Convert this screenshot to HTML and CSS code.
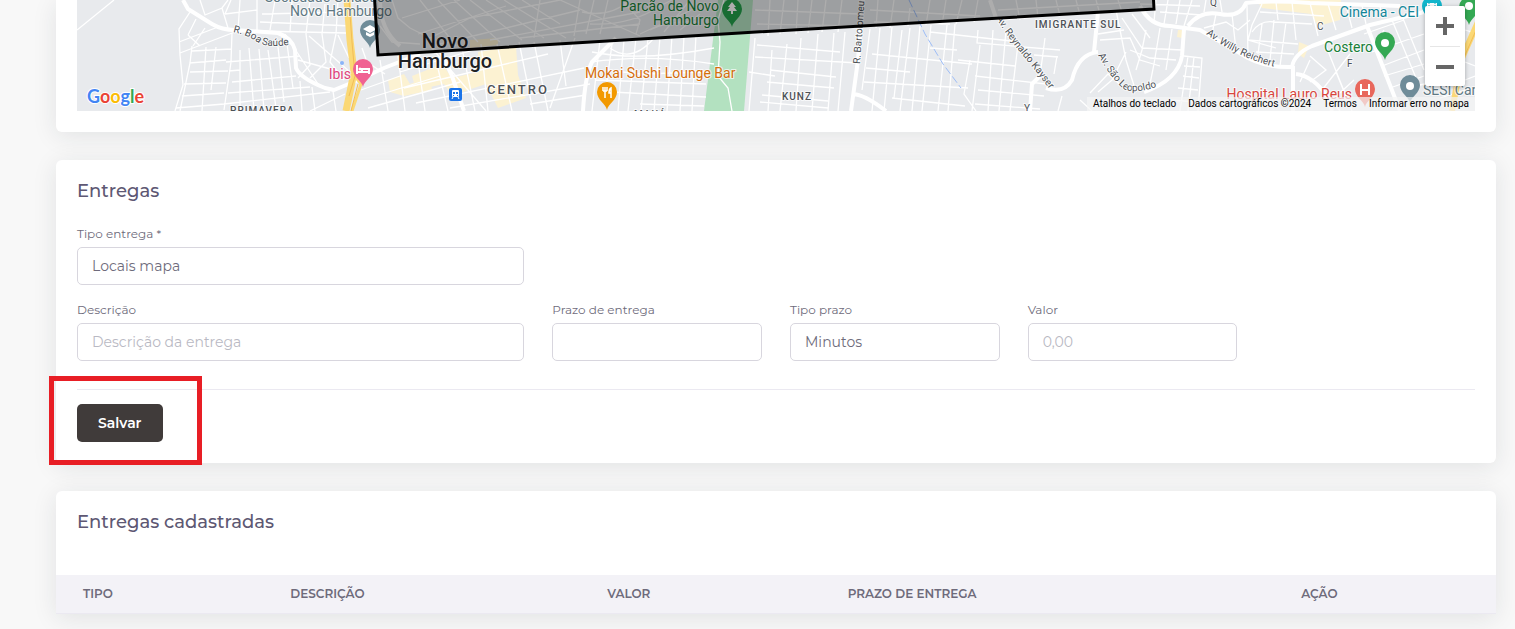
FILE: index.html
```html
<!DOCTYPE html>
<html lang="pt-br">
<head>
    <meta charset="UTF-8">
    <meta name="viewport" content="width=device-width, initial-scale=1.0">
    <title>Entregas</title>
    <link rel="stylesheet" href="styles.css">
</head>
<body>

    <main class="content">

        <!-- Mapa com a área de entrega -->
        <section class="card card-map">
            <div class="map">
                <svg class="map-canvas" viewBox="77 0 1398 111" preserveAspectRatio="xMinYMin slice" role="img" aria-label="Mapa de Novo Hamburgo">
                    <defs>
                        <path id="pin" d="M0 17C-1 11-10 7-10-1A10 10 0 0 1 10-1C10 7 1 11 0 17Z"/>
                        <path id="ruaBoaSaude" d="M233 32Q247 35 257 42Q268 49 294 44"/>
                        <path id="ruaBartolomeu" d="M860 64L866-20"/>
                        <path id="avReynaldo" d="M996 18Q1008 38 1025 58T1060 104"/>
                        <path id="avSaoLeo" d="M1098 55Q1112 80 1124 89Q1135 95 1162 85"/>
                        <path id="avWilly" d="M1206 34Q1240 60 1284 69"/>
                    </defs>

                    <rect x="77" width="1398" height="111" fill="#e8eaed"/>

                    <!-- Parque e centro -->
                    <path d="M718 0H753L744 111H704Z" fill="#b3e1c0"/>
                    <g fill="#fcf2d2">
                        <path d="M388 80L404 74L410 84L430 76L432 90L404 96L390 92Z"/>
                        <path d="M412 76L442 64L452 78L478 72L478 52L516 46L518 75L526 98L498 108L486 84L468 90L452 96L444 84L416 90Z"/>
                        <path d="M470 40L498 38L498 45L470 48Z"/>
                        <path d="M1256 0H1341L1340 20L1318 26L1311 14L1262 8Z"/>
                        <path d="M1299 42L1309 46L1304 58L1298 54Z"/>
                        <path d="M1178 30L1183 30L1182 38L1177 37Z"/>
                    </g>

                    <!-- Ruas menores -->
                    <g class="street">
                        <path d="M190 12L179 29L180 55L183 85L175 111M77 30L114 0M179 42L218 27M180 53L240 30M196 19L188 35M205 28L193 46M188 35L200 46M200 0L205 15L222 8L228 0M222 8L228 28M231 0L225 14M240 0L238 30M257 0L257 32M225 14L257 10M190 63L180 111M192 46L190 63L226 60M192 51L232 49M190 72L228 71M184 84L226 83M182 96L224 93M206 47L202 111M216 47L211 90M232 33L231 62L224 110M240 50L240 111M249 48L254 111M259 49L264 110M268 50L276 108M278 47L284 102M287 44L293 88M226 62L300 56M229 71L240 70M232 82L296 76M228 93L310 87M176 108L224 104L330 92"/>
                        <path d="M262 14L350 12M260 22L352 26M258 31L346 33M275 0L270 30M292 0L290 32M310 0L306 34M325 4L322 34M338 0L336 34M285 34L318 84M306 34L310 65L298 78M322 34L326 62L310 78M336 34L330 62L344 80M338 35L349 58M309 36L350 72M298 60L334 70M345 94L310 111M333 91L336 111M300 81L302 111M312 87L315 111"/>
                        <path d="M362 48L367 62L385 74M361 90L400 76M366 99L440 76M368 108L460 82M380 60L388 111M398 56L405 111M417 54L425 111M436 60L448 111M462 48L475 111M481 44L488 111M497 44L512 111M519 42L533 111M534 42L548 111M400 72L480 48M404 88L548 54M416 103L584 68M450 108L590 84M530 104L586 95M430 46L486 111M560 40L566 86M575 38L550 108"/>
                        <path d="M600 40L592 111M612 44L604 104M624 40L618 111M636 38L628 111M648 38L641 111M660 37L654 111M672 36L667 111M684 36L680 111M696 35L692 111M592 52Q640 62 714 48M590 62Q650 54 714 64M596 80L706 84M612 92L706 97M640 104L704 106M606 70L640 74L706 72M610 48Q632 64 654 38"/>
                        <path d="M755 38L749 111M772 50L768 111M787 44L780 111M801 38L796 111M818 34L812 111M834 33L828 111M845 32L838 111M757 45L840 52M755 57L858 63M770 70L836 77M767 82L834 88M762 95L828 101M760 102L828 108M749 72L775 76"/>
                        <path d="M870 29L862 90M880 28L872 111M892 27L884 111M902 30L894 98M910 28L900 111M920 26L912 111M931 25L922 111M947 25L938 111M955 24L948 111M872 54L972 64M866 68L910 72M864 82L968 88M892 98L965 106M930 32L1020 42M930 48L957 50M978 30L977 43L1060 50M970 60L964 94L976 111M980 45L972 111M993 30L988 111M1006 30L999 111M1018 44L1010 111M975 76L1046 84M978 90L1044 96M975 104L1040 109M1045 38L1040 76M1057 56L1054 74M1034 55L1058 57M958 60L1015 66"/>
                        <path d="M1098 34L1124 30M1100 40L1130 38L1140 60L1160 66M1116 10L1126 60L1136 92M1126 52L1112 80L1098 92M1130 50L1150 58L1176 60M1122 18L1142 48L1182 50M1132 14L1150 38M1146 30L1142 50L1136 70M1160 28L1154 64L1150 84M1172 29L1166 70M1090 93L1108 74L1124 88M1080 100L1092 111M1062 96L1058 111"/>
                        <path d="M1184 56L1202 58L1198 111M1184 66L1200 67M1183 76L1199 78M1178 88L1198 90M1170 100L1197 102M1188 56L1180 111M1194 57L1188 111M1140 4L1200 6M1156 0L1154 22M1168 0L1164 24M1180 0L1176 24M1192 0L1184 26M1206 0L1204 12M1220 0L1222 12M1160 12L1202 15M1204 28L1226 22L1238 30L1250 20M1216 14L1212 34M1232 14L1236 50M1247 5L1248 56M1262 4L1252 25L1248 40L1276 48M1262 24L1258 54M1274 20L1270 60M1286 22L1280 66M1252 32Q1260 20 1274 22L1312 24M1248 40L1298 44M1256 52L1294 54M1260 12L1324 16M1276 2L1278 20M1292 2L1296 40M1310 3L1318 36M1328 4L1336 30M1346 5L1352 28M1362 5L1366 24M1380 6L1382 18M1310 56L1326 70L1310 82M1326 46L1346 96M1336 72L1352 111M1310 60L1300 82M1350 54L1322 90M1322 90L1340 111M1354 80L1330 102M1384 30L1374 45M1402 16L1424 70M1392 20L1416 78M1372 52L1424 34M1382 66L1424 50M1384 76L1424 64M1390 88L1424 76M1364 34L1404 20M1408 88L1424 84M1465 30L1475 33M1465 62L1475 66M1465 80L1475 76M1466 90L1440 98"/>
                    </g>

                    <!-- Ruas dentro da área marcada -->
                    <g class="street">
                        <path d="M380 26L392 42L420 44M392 0L398 18L410 28L430 38L470 18L520 8L560 0M420 0L456 46M438 0L478 42M454 0L500 42M470 0L522 40M486 0L544 38M504 0L566 38M522 0L560 24M540 0L534 38M402 18L460 0M418 34L506 6M440 44L580 10M490 40L640 12M520 38L640 24M560 0L640 36M580 0L574 36M594 0L586 34M608 0L600 34M622 0L640 20L636 34M582 12Q610 18 630 0M590 24Q630 26 660 6L672 0M640 34L700 6M650 30Q670 20 700 22M664 32L690 0M680 30L700 14"/>
                        <path d="M755 10L860 14M757 24L858 26M770 0L768 36M784 0L780 34M798 0L796 34M812 0L808 33M826 0L822 32M842 0L838 32M870 10L980 16M874 22L950 24M878 0L876 28M894 0L890 28M910 8L908 26M930 0L926 25M946 0L942 25M962 0L956 24M978 0L974 22M998 10L1140 2M1002 20L1090 12M1016 0L1020 20M1036 0L1038 18M1056 0L1060 16M1076 0L1080 15M1096 0L1100 14M1118 0L1122 12"/>
                    </g>

                    <!-- Avenidas -->
                    <g class="avenue">
                        <path d="M183 0L188 9L212 24Q222 30 235 30L278 33Q292 38 295 50L296 68Q300 78 325 88L334 90L356 81L384 68L420 54"/>
                        <path d="M380 0Q380 30 400 46M440 50L452 76L464 111M616 38L592 62Q585 76 583 111"/>
                        <path d="M863 0L858 60L851 111M852 94Q864 94 886 111"/>
                        <path d="M990 0L996 18M1030 111L1032 84L1040 76M1046 88Q1064 94 1072 80Q1078 54 1098 52M1094 52L1098 12"/>
                        <path d="M1140 6Q1150 26 1170 26L1200 30L1238 52Q1260 68 1292 67Q1294 54 1312 46L1370 25L1424 12M1184 29L1182 56Q1178 80 1144 92M1293 66V111M1296 74Q1314 76 1328 98L1332 111M1367 26L1400 111M1188 26Q1200 10 1220 14T1246 3Q1270 0 1310 3L1400 6"/>
                    </g>
                    <path class="street" d="M724 0L718 20L720 42L718 76L728 88L732 111"/>
                    <path d="M909 0L925 34L943 64L961 88" fill="none" stroke="#9dbdf7" stroke-dasharray="8 3"/>

                    <!-- Rodovias -->
                    <g fill="none" stroke="#fbd875" stroke-width="7">
                        <path d="M347 0L350 40L354 72L350 92L346 111"/>
                        <path d="M355 76L361 84L352 111" stroke-width="3"/>
                        <path d="M1478 22L1462 58L1452 111" stroke-width="6"/>
                    </g>
                    <path d="M349 0L352 42L355 76L349 96M358 84L351 111M1477 28L1462 62" fill="none" stroke="#f2bd56"/>
                    <circle cx="342" cy="63" r="2" fill="#8ab4f8"/>

                    <!-- Nomes -->
                    <g class="label street-name">
                        <text><textPath href="#ruaBoaSaude">R. Boa Saúde</textPath></text>
                        <text><textPath href="#ruaBartolomeu">R. Bartolomeu</textPath></text>
                        <text><textPath href="#avReynaldo">Av. Reynaldo Kayser</textPath></text>
                        <text><textPath href="#avSaoLeo">Av. São Leopoldo</textPath></text>
                        <text><textPath href="#avWilly">Av. Willy Reichert</textPath></text>
                        <text x="1210" y="6">Q</text>
                        <text x="1317" y="30">C</text>
                        <text x="1347" y="67">F</text>
                        <text x="1024" y="112">Y</text>
                    </g>
                    <g class="label district">
                        <text x="230" y="114">PRIMAVERA</text>
                        <text x="782" y="100">KUNZ</text>
                        <text x="1035" y="28">IMIGRANTE SUL</text>
                        <text x="634" y="118">MAUÁ</text>
                        <text class="center" x="487" y="94">CENTRO</text>
                    </g>
                    <g class="label city">
                        <text x="445" y="48">Novo</text>
                        <text x="445" y="68">Hamburgo</text>
                    </g>
                    <g class="label place">
                        <text x="392" y="2" text-anchor="end" fill="#5f7883">Sociedade Ginástica</text>
                        <text x="392" y="16" text-anchor="end" fill="#5f7883">Novo Hamburgo</text>
                        <text x="351" y="79" text-anchor="end" fill="#e0447c">Ibis</text>
                        <text x="719" y="11" text-anchor="end" fill="#188038">Parcão de Novo</text>
                        <text x="719" y="25" text-anchor="end" fill="#188038">Hamburgo</text>
                        <text x="585" y="78" fill="#d56e0c">Mokai Sushi Lounge Bar</text>
                        <text x="1419" y="17" text-anchor="end" fill="#12869a">Cinema - CEI</text>
                        <text x="1373" y="52" text-anchor="end" fill="#188038">Costero</text>
                        <text x="1352" y="99" text-anchor="end" fill="#d9453d">Hospital Lauro Reus</text>
                        <text x="1423" y="95" fill="#5f7883">SESI Canudos</text>
                    </g>

                    <!-- Marcadores -->
                    <g transform="translate(370 31)">
                        <use href="#pin" fill="#6f8c99"/>
                        <path d="M-7-2L0-6L7-2L0 2ZM-4 1V4L0 6L4 4V1L0 3Z" fill="#fff"/>
                    </g>
                    <g transform="translate(363 70)">
                        <use href="#pin" fill="#f06292"/>
                        <path d="M-6-5V4M-6 2H6M6 4V-1H-1V2" fill="none" stroke="#fff" stroke-width="2"/>
                        <circle cx="-3" cy="-1" r="1.5" fill="#fff"/>
                    </g>
                    <g transform="translate(732 10)">
                        <use href="#pin" fill="#249f4b"/>
                        <path d="M0-8L4-3H2L5 1H1V4H-1V1H-5L-2-3H-4Z" fill="#fff"/>
                    </g>
                    <g transform="translate(607 93)">
                        <use href="#pin" fill="#f29900"/>
                        <path d="M-4-6V-2M-2-6V5M0-6V-2M-4-2H0M4 5V-5Q2-4 2 0H4" fill="none" stroke="#fff" stroke-width="1.5"/>
                    </g>
                    <g transform="translate(1432 7)">
                        <use href="#pin" fill="#12b5cb"/>
                        <path d="M-5-4H5V4H-5Z" fill="#fff"/>
                        <path d="M-3-4V4M3-4V4" stroke="#12b5cb" stroke-dasharray="1 1"/>
                    </g>
                    <g transform="translate(1469 8)">
                        <use href="#pin" fill="#34a853"/>
                        <circle cy="-2" r="4" fill="#fff"/>
                    </g>
                    <g transform="translate(1385 43)">
                        <use href="#pin" fill="#34a853"/>
                        <circle r="4" fill="#fff"/>
                    </g>
                    <g transform="translate(1410 86)">
                        <use href="#pin" fill="#6f8c99"/>
                        <circle r="4" fill="#fff"/>
                    </g>
                    <g transform="translate(1365 90)">
                        <use href="#pin" fill="#e8675c"/>
                        <path d="M-4-6V5M4-6V5M-4 0H4" fill="none" stroke="#fff" stroke-width="2"/>
                    </g>
                    <g transform="translate(449 88)">
                        <rect width="13" height="13" rx="2" fill="#1a73e8"/>
                        <rect x="3" y="2" width="7" height="7" rx="1" fill="#fff"/>
                        <path d="M4 4H6V6H4ZM7 4H9V6H7ZM4 7H5V8H4ZM8 7H9V8H8Z" fill="#1a73e8"/>
                        <path d="M4 9L3 11M9 9L10 11" stroke="#fff"/>
                    </g>

                    <!-- Área de entrega -->
                    <path d="M374-10L378 55L740 33L1154 9L1153-10Z" fill="#000" fill-opacity="0.32" stroke="#000" stroke-width="3"/>

                    <text class="google" x="87" y="103"><tspan fill="#4285f4">G</tspan><tspan fill="#ea4335">o</tspan><tspan fill="#fbbc04">o</tspan><tspan fill="#4285f4">g</tspan><tspan fill="#34a853">l</tspan><tspan fill="#ea4335">e</tspan></text>
                </svg>

                <div class="map-zoom">
                    <button type="button" aria-label="Aumentar o zoom">
                        <svg width="18" height="18" viewBox="0 0 18 18"><path d="M9 0V18M0 9H18" stroke="#666" stroke-width="4"/></svg>
                    </button>
                    <button type="button" aria-label="Diminuir o zoom">
                        <svg width="18" height="18" viewBox="0 0 18 18"><path d="M0 9H18" stroke="#666" stroke-width="4"/></svg>
                    </button>
                </div>

                <div class="map-footer">
                    <button type="button">Atalhos do teclado</button>
                    <span>Dados cartográficos ©2024</span>
                    <a href="#">Termos</a>
                    <a href="#">Informar erro no mapa</a>
                </div>
            </div>
        </section>

        <!-- Formulário de entregas -->
        <section class="card">
            <h2>Entregas</h2>
            <form>
                <div class="form-grid">
                    <div class="form-group wide">
                        <label for="tipoEntrega">Tipo entrega *</label>
                        <select id="tipoEntrega">
                            <option>Locais mapa</option>
                        </select>
                    </div>
                    <div class="form-group wide">
                        <label for="descricao">Descrição</label>
                        <input type="text" id="descricao" placeholder="Descrição da entrega">
                    </div>
                    <div class="form-group">
                        <label for="prazo">Prazo de entrega</label>
                        <input type="text" id="prazo">
                    </div>
                    <div class="form-group">
                        <label for="tipoPrazo">Tipo prazo</label>
                        <select id="tipoPrazo">
                            <option>Minutos</option>
                        </select>
                    </div>
                    <div class="form-group">
                        <label for="valor">Valor</label>
                        <input type="text" id="valor" placeholder="0,00">
                    </div>
                </div>
                <div class="form-actions">
                    <div class="save">
                        <button type="submit" class="btn">Salvar</button>
                        <span class="highlight"></span>
                    </div>
                </div>
            </form>
        </section>

        <!-- Lista de entregas -->
        <section class="card card-table">
            <h2>Entregas cadastradas</h2>
            <table>
                <thead>
                    <tr>
                        <th class="col-tipo">Tipo</th>
                        <th class="col-descricao">Descrição</th>
                        <th class="col-valor">Valor</th>
                        <th class="col-prazo">Prazo de entrega</th>
                        <th class="col-acao">Ação</th>
                    </tr>
                </thead>
            </table>
        </section>

    </main>

</body>
</html>
```
FILE: styles.css
```css
* {
    box-sizing: border-box;
}
body {
    margin: 0;
    background-color: #f8f8f8;
    font-family: Montserrat, Inter, sans-serif;
    font-size: 14px;
    color: #6e6b7b;
}
.content {
    display: flex;
    flex-direction: column;
    gap: 28px;
    padding: 0 19px 16px 56px;
}
.card {
    padding: 21px;
    background-color: #fff;
    border-radius: 6px;
    box-shadow: 0 4px 24px rgba(34, 41, 47, 0.1);
}
.card h2 {
    margin: 0 0 24px;
    font-size: 18px;
    line-height: 20px;
    font-weight: 500;
    color: #5e5873;
}

/* Mapa */
.card-map {
    padding-top: 0;
    border-radius: 0 0 6px 6px;
}
.map {
    position: relative;
    height: 111px;
    overflow: hidden;
    font-family: Roboto, sans-serif;
}
.map-canvas {
    display: block;
    width: 100%;
    height: 100%;
}
.street {
    fill: none;
    stroke: #fff;
    stroke-width: 1.3;
}
.avenue {
    fill: none;
    stroke: #fff;
    stroke-width: 4;
    stroke-linejoin: round;
}
.label {
    stroke: #fff;
    stroke-opacity: 0.7;
    stroke-width: 2;
    stroke-linejoin: round;
    paint-order: stroke;
}
.street-name {
    font-size: 10px;
    fill: #4d5156;
}
.district {
    font-size: 10px;
    font-weight: 500;
    letter-spacing: 1px;
    fill: #4d5156;
}
.center {
    font-size: 13px;
    letter-spacing: 2px;
}
.city {
    font-size: 20px;
    font-weight: 500;
    text-anchor: middle;
    fill: #202124;
}
.place {
    font-size: 14px;
}
.google {
    font-family: Lato, sans-serif;
    font-size: 18px;
    font-weight: 700;
    stroke: #fff;
    stroke-width: 2;
    paint-order: stroke;
}
.map-zoom {
    position: absolute;
    top: 6px;
    right: 10px;
    width: 40px;
    padding: 0 5px;
    background-color: #fff;
    border-radius: 2px;
    box-shadow: 0 1px 4px rgba(0, 0, 0, 0.3);
}
.map-zoom button {
    display: flex;
    align-items: center;
    justify-content: center;
    width: 100%;
    height: 40px;
    padding: 0;
    border: none;
    background: none;
    cursor: pointer;
}
.map-zoom button + button {
    border-top: 1px solid #e6e6e6;
}
.map-footer {
    position: absolute;
    right: 0;
    bottom: 0;
    display: flex;
    background-color: rgba(245, 245, 245, 0.7);
    font-size: 10px;
    line-height: 14px;
}
.map-footer > * {
    padding: 0 6px;
    border: none;
    background: none;
    font: inherit;
    color: #000;
    text-decoration: none;
}

/* Formulário */
.form-grid {
    display: grid;
    grid-template-columns: repeat(6, 1fr);
    gap: 16px 28px;
    padding-bottom: 28px;
}
.form-group {
    display: flex;
    flex-direction: column;
    gap: 4px;
}
.wide {
    grid-column: 1 / 3;
}
label {
    font-size: 12px;
    line-height: 18px;
}
input,
select {
    width: 100%;
    height: 38px;
    padding: 0 14px;
    border: 1px solid #d8d6de;
    border-radius: 5px;
    background-color: #fff;
    font-family: inherit;
    font-size: 14px;
    color: #6e6b7b;
    appearance: none;
}
input::placeholder {
    color: #b9b9c3;
}
.form-actions {
    display: flex;
    padding-top: 14px;
    border-top: 1px solid #ebe9f1;
}
.save {
    position: relative;
}
.btn {
    display: block;
    height: 38px;
    padding: 0 21px;
    border: none;
    border-radius: 5px;
    background-color: #403b3a;
    font-family: inherit;
    font-size: 14px;
    font-weight: 600;
    color: #fff;
    cursor: pointer;
}
.highlight {
    position: absolute;
    inset: -28px -39px -23px -28px;
    border: 5px solid #e81e25;
    pointer-events: none;
}

/* Tabela */
.card-table {
    padding: 21px 0 0;
}
.card-table h2 {
    margin: 0 21px 43px;
}
table {
    width: 100%;
    table-layout: fixed;
    border-collapse: collapse;
}
th {
    height: 38px;
    padding: 0 27px;
    border-bottom: 1px solid #ebe9f1;
    background-color: #f3f2f7;
    font-size: 12px;
    font-weight: 600;
    text-align: left;
    text-transform: uppercase;
    white-space: nowrap;
}
.col-tipo {
    width: 14.4%;
}
.col-descricao {
    width: 22%;
}
.col-valor {
    width: 16.7%;
}
.col-prazo {
    width: 31.5%;
}
```
